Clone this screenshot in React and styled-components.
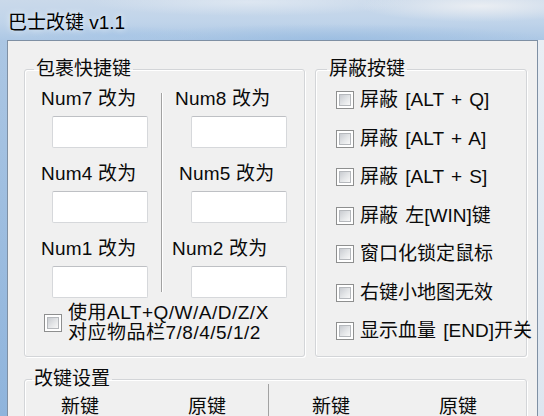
import styled, { createGlobalStyle } from "styled-components";

const GlobalStyle = createGlobalStyle`
  html, body {
    margin: 0;
    padding: 0;
  }
  body {
    background: #fff;
    font-family: "Liberation Sans", "Noto Sans CJK SC", sans-serif;
    color: #0a0a0a;
  }
`;

// Window chrome
const Window = styled.div`
  width: 544px;
  height: 416px;
  overflow: hidden;
  display: flex;
  flex-direction: column;
`;

const TitleBar = styled.div`
  height: 40px;
  flex: none;
  display: flex;
  align-items: center;
  padding-left: 8px;
  font-size: 19px;
  color: #000;
  text-shadow: 0 0 6px rgba(255, 255, 255, 0.9);
  background:
    radial-gradient(ellipse 120px 16px at 480px 6px, rgba(236, 239, 243, 0.95), transparent),
    radial-gradient(ellipse 160px 14px at 250px 2px, rgba(226, 234, 243, 0.8), transparent),
    radial-gradient(ellipse 90px 10px at 120px 36px, rgba(168, 198, 230, 0.8), transparent),
    radial-gradient(ellipse 220px 16px at 330px 40px, rgba(150, 186, 224, 0.7), transparent),
    linear-gradient(180deg, #cad9ea 0%, #c0d4ea 55%, #adc8e5 100%);
`;

const Frame = styled.div`
  flex: 1;
  display: flex;
  min-height: 0;
`;

const SideFrame = styled.div`
  flex: none;
  width: ${(p) => p.$w}px;
  background: ${(p) => p.$bg};
`;

const Client = styled.div`
  flex: 1;
  background: #f0f0f0;
  border: 1px solid #7f90a4;
  border-bottom: none;
  padding: 18px 10px 0 16px;
`;

// Group boxes
const GroupRow = styled.div`
  display: flex;
  gap: 10px;
`;

const Group = styled.fieldset`
  margin: ${(p) => p.$mt || 0}px 0 0;
  padding: 0;
  box-sizing: border-box;
  min-width: 0;
  width: ${(p) => p.$w}px;
  height: ${(p) => p.$h}px;
  border: 1px solid #d3d5d8;
  border-radius: 3px;
  box-shadow: inset 1px 1px 0 #fff, 1px 1px 0 #fff;
`;

const Legend = styled.legend`
  margin-left: ${(p) => p.$indent}px;
  padding: 0 2px;
  font-size: 19px;
  line-height: 20px;
`;

// Hotkey remap grid
const ParcelBody = styled.div`
  padding: 9px 0 0 16px;
`;

const Columns = styled.div`
  display: flex;
`;

const Column = styled.div`
  display: flex;
  flex-direction: column;
  gap: 15px;
  width: ${(p) => p.$w}px;
  padding-left: ${(p) => p.$pad || 0}px;
`;

const Divider = styled.div`
  width: 1px;
  margin: 5px 0 6px;
  background: #a2a2a2;
  box-shadow: 1px 0 0 #fff;
`;

const Cell = styled.div`
  display: flex;
  flex-direction: column;
  gap: 6px;
`;

const Label = styled.div`
  font-size: 19px;
  line-height: 22px;
  letter-spacing: 0.2px;
  white-space: nowrap;
  margin-left: ${(p) => p.$nudge || 0}px;
`;

const Edit = styled.input`
  box-sizing: border-box;
  width: 96px;
  height: 32px;
  margin: 0 0 0 ${(p) => p.$indent}px;
  border: 1px solid #d6d8db;
  border-top-color: #bec0c4;
  border-radius: 2px;
  background: #fff;
  font: inherit;
  outline: none;
`;

// Checkboxes
const Box = styled.span`
  flex: none;
  width: 18px;
  height: 18px;
  box-sizing: border-box;
  border: 1px solid #8e8f8f;
  background: #fff;
  padding: 2px;

  &::after {
    content: "";
    display: block;
    width: 100%;
    height: 100%;
    box-sizing: border-box;
    border: 1px solid #b5b8bc;
    background: linear-gradient(135deg, #c9ccd1 0%, #e4e6e8 55%, #f8f8f8 100%);
  }
`;

const CheckRow = styled.label`
  display: flex;
  align-items: center;
  gap: 6px;
  margin: ${(p) => p.$mt || 0}px 0 0 ${(p) => p.$ml || 0}px;
  font-size: 19px;
  line-height: ${(p) => p.$lh || 22}px;
  letter-spacing: ${(p) => p.$spacing || 0}px;
  word-spacing: 2px;
  white-space: nowrap;
`;

const BlockBody = styled.div`
  padding: 10px 0 0 20px;
  display: flex;
  flex-direction: column;
  gap: 16.5px;
`;

// Remap table header
const TableHead = styled.div`
  display: flex;
`;

const Half = styled.div`
  width: ${(p) => p.$w}px;
  display: grid;
  grid-template-columns: 100px 100px;
  column-gap: 27px;
  align-content: start;
  padding: ${(p) => (p.$split ? 12 : 7)}px 0 0 ${(p) => p.$pad}px;
  margin-top: ${(p) => (p.$split ? -5 : 0)}px;
  border-left: ${(p) => (p.$split ? "1px solid #a2a2a2" : "none")};
  height: 60px;
`;

const HeadCell = styled.div`
  text-align: center;
  font-size: 19px;
  line-height: 22px;
`;

const cells = [
  [
    { key: "Num7", nudge: 0 },
    { key: "Num4", nudge: 0 },
    { key: "Num1", nudge: 0 },
  ],
  [
    { key: "Num8", nudge: 0 },
    { key: "Num5", nudge: 4 },
    { key: "Num2", nudge: -3 },
  ],
];

const blocks = [
  "屏蔽 [ALT + Q]",
  "屏蔽 [ALT + A]",
  "屏蔽 [ALT + S]",
  "屏蔽 左[WIN]键",
  "窗口化锁定鼠标",
  "右键小地图无效",
  "显示血量 [END]开关",
];

export default function App() {
  return (
    <>
      <GlobalStyle />
      <Window>
        <TitleBar>巴士改键 v1.1</TitleBar>
        <Frame>
          <SideFrame $w={7} $bg="linear-gradient(180deg, #abc6e3, #8fb4dc)" />
          <Client>
            <GroupRow>
              <Group $w={281} $h={298}>
                <Legend $indent={9}>包裹快捷键</Legend>
                <ParcelBody>
                  <Columns>
                    <Column $w={121}>
                      {cells[0].map((c) => (
                        <Cell key={c.key}>
                          <Label $nudge={c.nudge}>{c.key} 改为</Label>
                          <Edit $indent={11} />
                        </Cell>
                      ))}
                    </Column>
                    <Divider />
                    <Column $w={130} $pad={13}>
                      {cells[1].map((c) => (
                        <Cell key={c.key}>
                          <Label $nudge={c.nudge}>{c.key} 改为</Label>
                          <Edit $indent={16} />
                        </Cell>
                      ))}
                    </Column>
                  </Columns>
                  <CheckRow $mt={5} $ml={3} $lh={20} $spacing={0.5}>
                    <Box />
                    <span>
                      使用ALT+Q/W/A/D/Z/X
                      <br />
                      对应物品栏7/8/4/5/1/2
                    </span>
                  </CheckRow>
                </ParcelBody>
              </Group>

              <Group $w={212} $h={298}>
                <Legend $indent={11}>屏蔽按键</Legend>
                <BlockBody>
                  {blocks.map((b) => (
                    <CheckRow key={b}>
                      <Box />
                      <span>{b}</span>
                    </CheckRow>
                  ))}
                </BlockBody>
              </Group>
            </GroupRow>

            <Group $w={503} $h={90} $mt={12}>
              <Legend $indent={7}>改键设置</Legend>
              <TableHead>
                <Half $w={247} $pad={5}>
                  <HeadCell>新键</HeadCell>
                  <HeadCell>原键</HeadCell>
                </Half>
                <Half $w={254} $pad={12} $split>
                  <HeadCell>新键</HeadCell>
                  <HeadCell>原键</HeadCell>
                </Half>
              </TableHead>
            </Group>
          </Client>
          <SideFrame $w={6} $bg="linear-gradient(180deg, #e9eef4, #dde6f0)" />
        </Frame>
      </Window>
    </>
  );
}
